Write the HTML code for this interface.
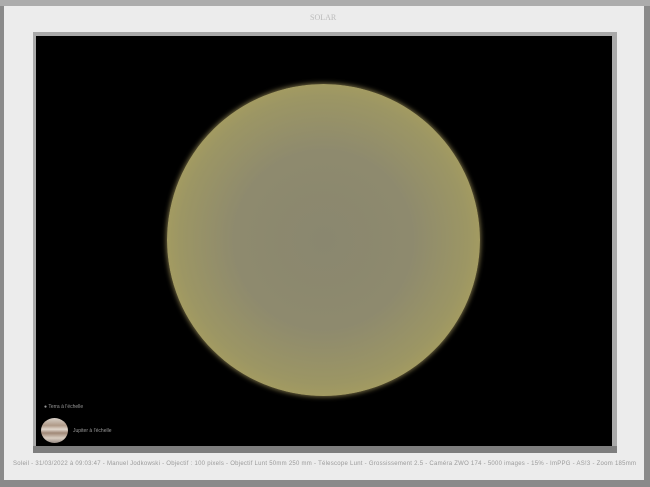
<!DOCTYPE html>
<html><head><style>
html,body{margin:0;padding:0}
body{width:650px;height:487px;position:relative;background:#8a8a8a;overflow:hidden;font-family:"Liberation Sans",sans-serif}
.top{position:absolute;left:0;top:0;width:650px;height:6px;background:#acacac}
.panel{position:absolute;left:4px;top:6px;width:640px;height:474px;background:#ececec}
.frame{position:absolute;left:33px;top:32px;width:584px;height:421px;background:#a9a9a9}
.frame2{position:absolute;left:36px;top:36px;width:576px;height:412px;background:#000;overflow:hidden}
.bottomb{position:absolute;left:33px;top:446px;width:584px;height:7px;background:#7e7e7e}
.sun{position:absolute;left:167px;top:84px;width:313px;height:312px;border-radius:50%;
background:radial-gradient(circle at 50% 50%,#8a876f 0%,#8e8a6e 40%,#9c9664 65%,#b0a45c 82%,#c4b65e 93%,#dccc78 98%,#f4e8a8 100%);
box-shadow:0 0 5px 1px rgba(230,210,130,.5)}
.t{position:absolute;color:#aaa;font-size:6px;white-space:nowrap}
.jup{position:absolute;left:41px;top:418px;width:27px;height:25px;border-radius:50%;
background:linear-gradient(#d8d0c8,#b09a88 30%,#e0d6cc 45%,#a08876 60%,#d8ccc0 80%,#9a8e86)}
</style></head><body>
<div class="top"></div>
<div class="panel"></div>
<div class="t" style="left:310px;top:13px;color:#bbb;font-size:8px;font-family:'Liberation Serif',serif">SOLAR</div>
<div class="frame"></div>
<div class="frame2"></div>
<div class="bottomb"></div>
<div class="sun"></div>
<div class="t" style="left:44px;top:404px;font-size:5px;color:#999">● Terra à l'échelle</div>
<div class="jup"></div>
<div class="t" style="left:73px;top:428px;font-size:5px;color:#999">Jupiter à l'échelle</div>
<div class="t" style="left:13px;top:461px;font-size:6px;color:#9a9a9a;letter-spacing:0.26px">Soleil - 31/03/2022 à 09:03:47 - Manuel Jodkowski - Objectif : 100 pixels - Objectif Lunt 50mm 250 mm - Télescope Lunt - Grossissement 2.5 - Caméra ZWO 174 - 5000 images - 15% - ImPPG - AS!3 - Zoom 185mm</div>
</body></html>
